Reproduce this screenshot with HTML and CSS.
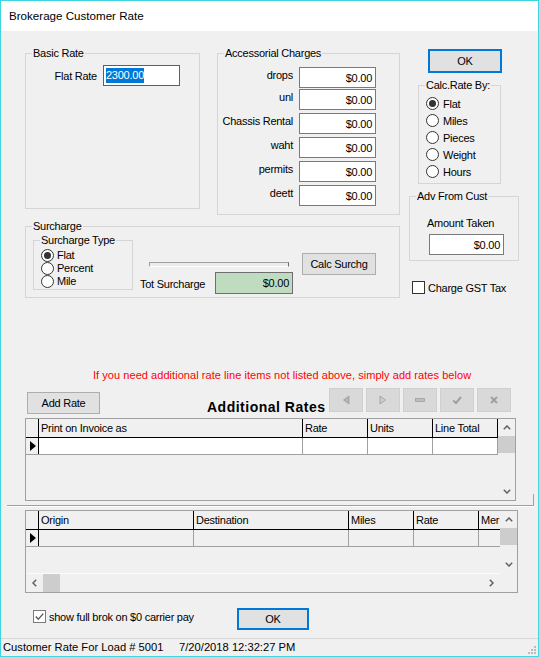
FILE: index.html
```html
<!DOCTYPE html>
<html>
<head>
<meta charset="utf-8">
<title>Brokerage Customer Rate</title>
<link rel="stylesheet" href="styles.css">
</head>
<body>
<div class="window">
  <div class="titlebar">Brokerage Customer Rate</div>
  <div class="client">
    <div class="top">
      <div class="left-col">
        <div class="group-row">
          <div class="group basic">
            <span class="group-label">Basic Rate</span>
            <div class="field-row">
              <span class="lbl-flat">Flat Rate</span>
              <div class="input focus"><span class="sel">2300.00</span></div>
            </div>
          </div>
          <div class="group accessorial">
            <span class="group-label">Accessorial Charges</span>
            <div class="acc-row"><span class="acc-lbl">drops</span><div class="input">$0.00</div></div>
            <div class="acc-row r2"><span class="acc-lbl">unl</span><div class="input">$0.00</div></div>
            <div class="acc-row"><span class="acc-lbl">Chassis Rental</span><div class="input">$0.00</div></div>
            <div class="acc-row"><span class="acc-lbl">waht</span><div class="input">$0.00</div></div>
            <div class="acc-row"><span class="acc-lbl">permits</span><div class="input">$0.00</div></div>
            <div class="acc-row"><span class="acc-lbl">deett</span><div class="input">$0.00</div></div>
          </div>
        </div>
        <div class="group surcharge">
          <span class="group-label">Surcharge</span>
          <div class="group type-box">
            <span class="group-label">Surcharge Type</span>
            <div class="radio-row"><span class="radio on"></span>Flat</div>
            <div class="radio-row"><span class="radio"></span>Percent</div>
            <div class="radio-row"><span class="radio"></span>Mile</div>
          </div>
          <div class="sur-mid">
            <div class="slider"></div>
            <div class="tot-row">
              <span class="tot-lbl">Tot Surcharge</span>
              <div class="green">$0.00</div>
            </div>
          </div>
          <div class="btn calc-btn">Calc Surchg</div>
        </div>
      </div>
      <div class="right-col">
        <div class="btn ok-top">OK</div>
        <div class="group calc-box">
          <span class="group-label">Calc.Rate By:</span>
          <div class="rb-row"><span class="radio on"></span>Flat</div>
          <div class="rb-row"><span class="radio"></span>Miles</div>
          <div class="rb-row"><span class="radio"></span>Pieces</div>
          <div class="rb-row"><span class="radio"></span>Weight</div>
          <div class="rb-row"><span class="radio"></span>Hours</div>
        </div>
        <div class="group adv-box">
          <span class="group-label">Adv From Cust</span>
          <div class="amt-lbl">Amount Taken</div>
          <div class="input amt-input">$0.00</div>
        </div>
        <div class="gst"><span class="check"></span><span class="gst-text">Charge GST Tax</span></div>
      </div>
    </div>

    <div class="notice">If you need additional rate line items not listed above, simply add rates below</div>

    <div class="toolbar">
      <div class="btn add-btn">Add Rate</div>
      <div class="add-title">Additional Rates</div>
      <div class="nav">
        <div class="nav-btn"><svg width="10" height="10" viewBox="0 0 10 10"><polygon points="8,1 8,9 2.5,5" fill="#b4b4b4" stroke="#9c9c9c" stroke-width="0.8"/></svg></div>
        <div class="nav-btn"><svg width="10" height="10" viewBox="0 0 10 10"><polygon points="2,1 2,9 7.5,5" fill="#cccccc" stroke="#9c9c9c" stroke-width="0.8"/></svg></div>
        <div class="nav-btn"><svg width="10" height="10" viewBox="0 0 10 10"><rect x="0.5" y="3.5" width="9" height="3" fill="#bdbdbd" stroke="#a0a0a0" stroke-width="0.8"/></svg></div>
        <div class="nav-btn"><svg width="10" height="10" viewBox="0 0 10 10"><polyline points="1.2,5.5 4,8 9,2" fill="none" stroke="#a0a0a0" stroke-width="2"/></svg></div>
        <div class="nav-btn"><svg width="10" height="10" viewBox="0 0 10 10"><path d="M2 2 L8 8 M8 2 L2 8" stroke="#a0a0a0" stroke-width="2"/></svg></div>
      </div>
    </div>

    <div class="grid grid1">
      <div class="grid-main">
        <div class="g-header">
          <div class="gc ind"></div>
          <div class="gc w264">Print on Invoice as</div>
          <div class="gc w65">Rate</div>
          <div class="gc w65">Units</div>
          <div class="gc w65">Line Total</div>
        </div>
        <div class="g-row white">
          <div class="gc ind"><svg width="6" height="10" viewBox="0 0 6 10"><polygon points="0,0 6,5 0,10" fill="#000"/></svg></div>
          <div class="gc w264"></div>
          <div class="gc w65"></div>
          <div class="gc w65"></div>
          <div class="gc w65"></div>
        </div>
      </div>
      <div class="vscroll">
        <div class="sb-arrow"><svg width="8" height="5" viewBox="0 0 8 5"><polyline points="0.8,4.2 4,1 7.2,4.2" fill="none" stroke="#606060" stroke-width="1.5"/></svg></div>
        <div class="sb-thumb"></div>
        <div class="sb-track"></div>
        <div class="sb-arrow"><svg width="8" height="5" viewBox="0 0 8 5"><polyline points="0.8,0.8 4,4 7.2,0.8" fill="none" stroke="#606060" stroke-width="1.5"/></svg></div>
      </div>
    </div>

    <div class="splitter"></div>

    <div class="grid grid2">
      <div class="g2-top">
        <div class="grid-main">
          <div class="g-header">
            <div class="gc ind"></div>
            <div class="gc w155">Origin</div>
            <div class="gc w155">Destination</div>
            <div class="gc w65">Miles</div>
            <div class="gc w65">Rate</div>
            <div class="gc rest">Mer</div>
          </div>
          <div class="g-row">
            <div class="gc ind"><svg width="6" height="10" viewBox="0 0 6 10"><polygon points="0,0 6,5 0,10" fill="#000"/></svg></div>
            <div class="gc w155"></div>
            <div class="gc w155"></div>
            <div class="gc w65"></div>
            <div class="gc w65"></div>
            <div class="gc rest"></div>
          </div>
        </div>
        <div class="vscroll">
          <div class="sb-arrow"><svg width="8" height="5" viewBox="0 0 8 5"><polyline points="0.8,4.2 4,1 7.2,4.2" fill="none" stroke="#606060" stroke-width="1.5"/></svg></div>
          <div class="sb-thumb"></div>
          <div class="sb-track"></div>
          <div class="sb-arrow"><svg width="8" height="5" viewBox="0 0 8 5"><polyline points="0.8,0.8 4,4 7.2,0.8" fill="none" stroke="#606060" stroke-width="1.5"/></svg></div>
        </div>
      </div>
      <div class="hscroll-row">
        <div class="hscroll">
          <div class="hs-arrow"><svg width="5" height="8" viewBox="0 0 5 8"><polyline points="4.2,0.8 1,4 4.2,7.2" fill="none" stroke="#606060" stroke-width="1.5"/></svg></div>
          <div class="hs-thumb"></div>
          <div class="hs-track"></div>
          <div class="hs-arrow"><svg width="5" height="8" viewBox="0 0 5 8"><polyline points="0.8,0.8 4,4 0.8,7.2" fill="none" stroke="#606060" stroke-width="1.5"/></svg></div>
        </div>
        <div class="corner"></div>
      </div>
    </div>

    <div class="bottom">
      <div class="cb-wrap">
        <span class="check disabled"><svg width="11" height="11" viewBox="0 0 11 11"><polyline points="1.8,5.6 4.3,8.2 9.3,2.6" fill="none" stroke="#5a5a5a" stroke-width="1.4"/></svg></span>
        <span class="cb-text">show full brok on $0 carrier pay</span>
      </div>
      <div class="btn ok-bottom">OK</div>
    </div>

    <div class="statusbar"><span class="st-load">Customer Rate For Load # 5001</span><span>7/20/2018 12:32:27 PM</span></div>

    <div class="grip">
      <i class="d d1"></i><i class="d d2"></i><i class="d d3"></i>
      <i class="d d4"></i><i class="d d5"></i><i class="d d6"></i>
    </div>
  </div>
</div>
</body>
</html>
```

FILE: styles.css
```css
* { box-sizing: border-box; }
html, body { margin: 0; padding: 0; background: #f0f0f0; }
body {
  font-family: "Liberation Sans", Arial, sans-serif;
  font-size: 11px;
  letter-spacing: -0.25px;
  color: #000;
}
.window {
  width: 539px;
  height: 657px;
  border: 1px solid #3fd5e1;
  background: #f0f0f0;
  display: flex;
  flex-direction: column;
  overflow: hidden;
}
.titlebar {
  flex: none;
  height: 30px;
  background: #fff;
  font-size: 11.6px;
  letter-spacing: 0;
  line-height: 30px;
  padding-left: 8px;
}
.client {
  flex: 1;
  position: relative;
  display: flex;
  flex-direction: column;
}

/* top area */
.top { flex: none; height: 338px; display: flex; align-items: flex-start; }
.left-col { margin-left: 24px; margin-top: 22px; width: 375px; }
.group-row { display: flex; align-items: flex-start; }
.group { position: relative; border: 1px solid #d5d5d5; flex: none; }
.group-label {
  position: absolute;
  top: -7px;
  left: 6px;
  padding: 0 1px;
  background: #f0f0f0;
  line-height: 13px;
  white-space: nowrap;
}
.basic { width: 175px; height: 156px; }
.field-row { display: flex; align-items: center; margin-top: 11px; }
.lbl-flat { width: 71px; text-align: right; margin-right: 6px; }
.input {
  flex: none;
  width: 77px;
  height: 21px;
  border: 1px solid #7a7a7a;
  background: #fff;
  display: flex;
  align-items: center;
  justify-content: flex-end;
  padding-right: 3px;
}
.input.focus { border-color: #0078d7; justify-content: flex-start; padding-left: 2px; }
.sel { background: #0078d7; color: #fff; line-height: 15px; }

.accessorial { width: 183px; height: 162px; margin-left: 17px; padding-top: 13px; }
.acc-row { display: flex; align-items: flex-start; margin-top: 3px; }
.acc-row:first-of-type { margin-top: 0; }
.acc-row.r2 { margin-top: 1px; }
.acc-lbl { width: 75px; text-align: right; margin-right: 6px; margin-top: 2px; line-height: 13px; white-space: nowrap; }

.surcharge { width: 375px; height: 72px; margin-top: 11px; display: flex; align-items: flex-start; }
.type-box { margin-left: 7px; margin-top: 13px; width: 100px; height: 50px; padding-top: 8px; padding-left: 7px; }
.radio-row { display: flex; align-items: center; height: 13px; line-height: 13px; }
.radio-row .radio { margin-right: 3px; }
.radio {
  flex: none;
  position: relative;
  width: 13px;
  height: 13px;
  border-radius: 50%;
  border: 1px solid #333;
  background: #fff;
}
.radio.on::after {
  content: "";
  position: absolute;
  left: 2px;
  top: 2px;
  width: 7px;
  height: 7px;
  border-radius: 50%;
  background: #333;
}
.sur-mid { margin-left: 7px; margin-top: 35px; width: 153px; }
.slider {
  margin-left: 9px;
  width: 140px;
  height: 5px;
  border: 1px solid;
  border-color: #a0a0a0 #6a6a6a #ffffff #a0a0a0;
  background: #ebebeb;
}
.tot-row { display: flex; align-items: center; margin-top: 5px; }
.tot-lbl { width: 75px; white-space: nowrap; padding-top: 2px; }
.green {
  width: 78px;
  height: 22px;
  background: #c0dcc0;
  border: 1px solid #6e6e6e;
  text-align: right;
  padding-right: 3px;
  line-height: 20px;
}
.btn {
  flex: none;
  background: #e1e1e1;
  border: 1px solid #adadad;
  display: flex;
  align-items: center;
  justify-content: center;
  white-space: nowrap;
}
.calc-btn { margin-left: 9px; margin-top: 26px; width: 74px; height: 22px; }

.right-col { margin-left: 9px; margin-top: 18px; width: 110px; }
.ok-top { margin-left: 19px; width: 74px; height: 24px; border: 2px solid #0078d7; }
.calc-box { margin-top: 12px; margin-left: 9px; width: 83px; height: 99px; padding-top: 9px; padding-left: 7px; }
.rb-row { display: flex; align-items: center; height: 17px; }
.rb-row .radio { margin-right: 4px; }
.adv-box { margin-top: 12px; width: 110px; height: 65px; }
.amt-lbl { margin-top: 20px; padding-left: 17px; line-height: 13px; }
.amt-input { margin-top: 4px; margin-left: 19px; width: 75px; }
.gst { margin-top: 20px; margin-left: 3px; display: flex; align-items: center; }
.check {
  flex: none;
  width: 13px;
  height: 13px;
  border: 1px solid #333;
  background: #fff;
  display: flex;
  align-items: center;
  justify-content: center;
}
.check.disabled { border-color: #7a7a7a; }
.gst-text, .cb-text { margin-left: 3px; white-space: nowrap; }

/* notice + toolbar */
.notice { flex: none; height: 13px; line-height: 13px; padding-left: 92px; color: #ff0000; letter-spacing: 0.05px; white-space: nowrap; }
.toolbar { flex: none; height: 36px; display: flex; align-items: flex-start; }
.add-btn { margin-left: 26px; margin-top: 10px; width: 73px; height: 22px; }
.add-title {
  flex: none;
  width: 229px;
  padding-left: 107px;
  margin-top: 17px;
  font-weight: bold;
  font-size: 14px;
  letter-spacing: 0.5px;
  line-height: 16px;
  white-space: nowrap;
}
.nav { display: flex; gap: 3px; margin-top: 6px; }
.nav-btn {
  width: 34px;
  height: 24px;
  background: #d9d9d9;
  border: 1px solid #cfcfcf;
  display: flex;
  align-items: center;
  justify-content: center;
}

/* grids */
.grid { flex: none; margin-left: 24px; border: 1px solid #a0a0a0; background: #f0f0f0; display: flex; }
.grid1 { width: 491px; height: 83px; }
.grid2 { width: 493px; height: 83px; margin-top: 3px; flex-direction: column; }
.grid-main { flex: 1; overflow: hidden; min-width: 0; }
.g-header { display: flex; height: 19px; border-bottom: 1px solid #000; }
.g-header .gc { border-right: 1px solid #000; line-height: 18px; }
.g-row { display: flex; height: 17px; border-bottom: 1px solid #a0a0a0; }
.g-row .gc { border-right: 1px solid #a0a0a0; }
.g-row.white .gc { background: #fff; }
.g-row .gc.ind, .g-row.white .gc.ind { background: #f0f0f0; border-right: 1px solid #000; padding: 0 0 0 4px; display: flex; align-items: center; }
.gc { flex: none; padding-left: 2px; white-space: nowrap; overflow: hidden; }
.gc.ind { width: 13px; padding: 0; }
.w264 { width: 264px; }
.w155 { width: 155px; }
.w65 { width: 65px; }
.gc.rest { flex: 1; border-right: none !important; }
.vscroll { flex: none; width: 17px; display: flex; flex-direction: column; background: #f0f0f0; }
.sb-arrow { flex: none; height: 17px; display: flex; align-items: center; justify-content: center; }
.sb-thumb { flex: none; height: 17px; background: #cdcdcd; }
.sb-track { flex: 1; }
.g2-top { display: flex; height: 62px; }
.hscroll-row { display: flex; height: 19px; }
.hscroll { flex: 1; display: flex; border-top: 1px solid #fbfbfb; }
.hs-arrow { flex: none; width: 17px; display: flex; align-items: center; justify-content: center; }
.hs-thumb { flex: none; width: 17px; background: #cdcdcd; }
.hs-track { flex: 1; }
.corner { flex: none; width: 17px; }

.splitter {
  flex: none;
  position: relative;
  margin-left: 6px;
  margin-top: 4px;
  width: 527px;
  height: 2px;
  border-top: 1px solid #a0a0a0;
  border-bottom: 1px solid #ffffff;
}
.splitter::after {
  content: "";
  position: absolute;
  right: 0;
  bottom: 0;
  width: 1px;
  height: 12px;
  background: #a0a0a0;
}

/* bottom */
.bottom { flex: none; display: flex; align-items: flex-start; margin-top: 15px; height: 22px; }
.cb-wrap { margin-left: 32px; margin-top: 2px; width: 204px; display: flex; align-items: center; }
.ok-bottom { width: 72px; height: 22px; border: 2px solid #0078d7; }
.statusbar {
  flex: none;
  margin-top: 8px;
  border-top: 1px solid #d7d7d7;
  height: 18px;
  font-size: 11.2px;
  letter-spacing: 0;
  line-height: 17px;
  padding-left: 2px;
  white-space: nowrap;
}
.st-load { display: inline-block; width: 176px; }

.grip { position: absolute; right: 1px; bottom: 1px; width: 9px; height: 9px; }
.grip .d { position: absolute; width: 2px; height: 2px; background: #bcbcbc; }
.d1 { left: 6px; top: 0; }
.d2 { left: 3px; top: 3px; }
.d3 { left: 6px; top: 3px; }
.d4 { left: 0; top: 6px; }
.d5 { left: 3px; top: 6px; }
.d6 { left: 6px; top: 6px; }
```
